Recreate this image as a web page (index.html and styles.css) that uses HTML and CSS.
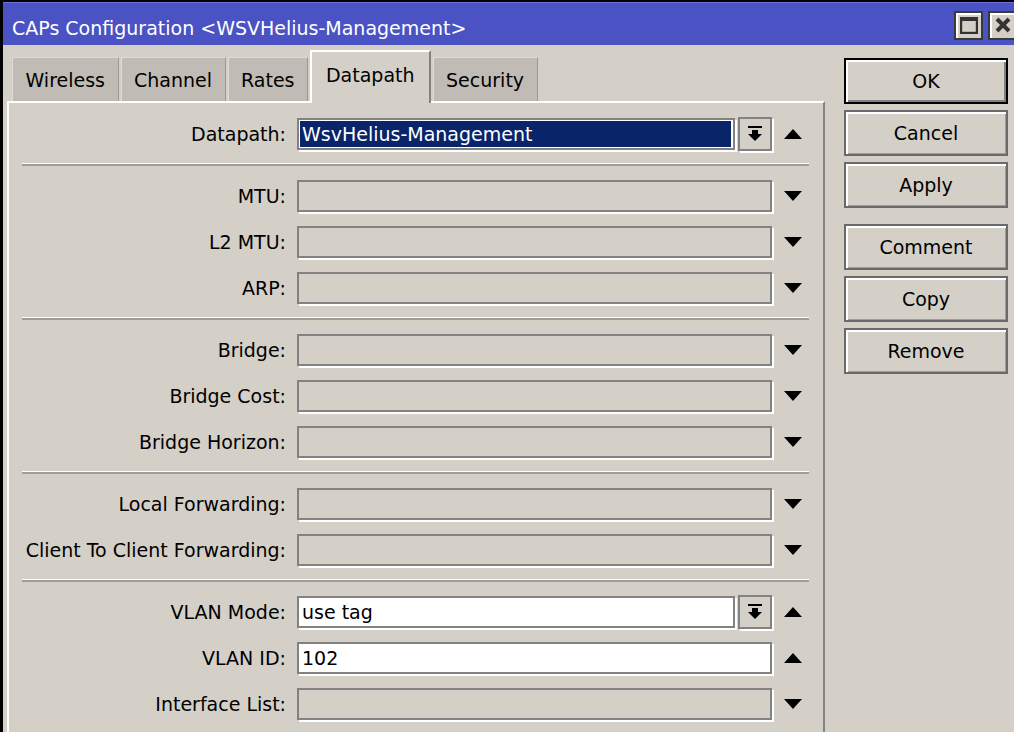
FILE: index.html
```html
<!DOCTYPE html>
<html>
<head>
<meta charset="utf-8">
<link rel="stylesheet" href="styles.css">
</head>
<body>
<div class="window">
  <div class="titlebar">
    <span class="title">CAPs Configuration &lt;WSVHelius-Management&gt;</span>
    <div class="wbtns">
      <span class="wbtn"><svg width="18" height="17" viewBox="0 0 18 17"><rect x="1" y="1.5" width="16" height="14.5" fill="none" stroke="#333" stroke-width="2.4"/><rect x="0" y="0" width="18" height="4" fill="#333"/></svg></span>
      <span class="wbtn close"><svg width="16" height="16" viewBox="0 0 16 16"><path d="M2 2 L14 14 M14 2 L2 14" stroke="#333" stroke-width="4"/></svg></span>
    </div>
  </div>
  <div class="main">
    <div class="left">
      <div class="tabs">
        <div class="tab">Wireless</div>
        <div class="tab">Channel</div>
        <div class="tab">Rates</div>
        <div class="tab active">Datapath</div>
        <div class="tab">Security</div>
      </div>
      <div class="panel">
        <div class="row">
          <span class="lbl">Datapath:</span>
          <div class="ctrl combo">
            <div class="field sel"><span class="seltext">WsvHelius-Management</span></div>
            <div class="ddbtn"><svg width="14" height="16" viewBox="0 0 14 16"><rect x="0" y="0" width="14" height="2" fill="#000"/><rect x="4" y="4" width="6" height="4" fill="#000"/><polygon points="0,8 14,8 7,15" fill="#000"/></svg></div>
          </div>
          <svg class="arrow" width="18" height="10" viewBox="0 0 18 10"><polygon points="9,0 18,10 0,10" fill="#000"/></svg>
        </div>
        <div class="sep"></div>
        <div class="row">
          <span class="lbl">MTU:</span>
          <div class="ctrl"><div class="field"></div></div>
          <svg class="arrow" width="18" height="10" viewBox="0 0 18 10"><polygon points="0,0 18,0 9,10" fill="#000"/></svg>
        </div>
        <div class="row">
          <span class="lbl">L2 MTU:</span>
          <div class="ctrl"><div class="field"></div></div>
          <svg class="arrow" width="18" height="10" viewBox="0 0 18 10"><polygon points="0,0 18,0 9,10" fill="#000"/></svg>
        </div>
        <div class="row">
          <span class="lbl">ARP:</span>
          <div class="ctrl"><div class="field"></div></div>
          <svg class="arrow" width="18" height="10" viewBox="0 0 18 10"><polygon points="0,0 18,0 9,10" fill="#000"/></svg>
        </div>
        <div class="sep"></div>
        <div class="row">
          <span class="lbl">Bridge:</span>
          <div class="ctrl"><div class="field"></div></div>
          <svg class="arrow" width="18" height="10" viewBox="0 0 18 10"><polygon points="0,0 18,0 9,10" fill="#000"/></svg>
        </div>
        <div class="row">
          <span class="lbl">Bridge Cost:</span>
          <div class="ctrl"><div class="field"></div></div>
          <svg class="arrow" width="18" height="10" viewBox="0 0 18 10"><polygon points="0,0 18,0 9,10" fill="#000"/></svg>
        </div>
        <div class="row">
          <span class="lbl">Bridge Horizon:</span>
          <div class="ctrl"><div class="field"></div></div>
          <svg class="arrow" width="18" height="10" viewBox="0 0 18 10"><polygon points="0,0 18,0 9,10" fill="#000"/></svg>
        </div>
        <div class="sep"></div>
        <div class="row">
          <span class="lbl">Local Forwarding:</span>
          <div class="ctrl"><div class="field"></div></div>
          <svg class="arrow" width="18" height="10" viewBox="0 0 18 10"><polygon points="0,0 18,0 9,10" fill="#000"/></svg>
        </div>
        <div class="row">
          <span class="lbl">Client To Client Forwarding:</span>
          <div class="ctrl"><div class="field"></div></div>
          <svg class="arrow" width="18" height="10" viewBox="0 0 18 10"><polygon points="0,0 18,0 9,10" fill="#000"/></svg>
        </div>
        <div class="sep"></div>
        <div class="row">
          <span class="lbl">VLAN Mode:</span>
          <div class="ctrl combo">
            <div class="field white">use tag</div>
            <div class="ddbtn"><svg width="14" height="16" viewBox="0 0 14 16"><rect x="0" y="0" width="14" height="2" fill="#000"/><rect x="4" y="4" width="6" height="4" fill="#000"/><polygon points="0,8 14,8 7,15" fill="#000"/></svg></div>
          </div>
          <svg class="arrow" width="18" height="10" viewBox="0 0 18 10"><polygon points="9,0 18,10 0,10" fill="#000"/></svg>
        </div>
        <div class="row">
          <span class="lbl">VLAN ID:</span>
          <div class="ctrl"><div class="field white">102</div></div>
          <svg class="arrow" width="18" height="10" viewBox="0 0 18 10"><polygon points="9,0 18,10 0,10" fill="#000"/></svg>
        </div>
        <div class="row">
          <span class="lbl">Interface List:</span>
          <div class="ctrl"><div class="field"></div></div>
          <svg class="arrow" width="18" height="10" viewBox="0 0 18 10"><polygon points="0,0 18,0 9,10" fill="#000"/></svg>
        </div>
      </div>
    </div>
    <div class="buttons">
      <div class="btn default">OK</div>
      <div class="btn">Cancel</div>
      <div class="btn">Apply</div>
      <div class="btn group">Comment</div>
      <div class="btn">Copy</div>
      <div class="btn">Remove</div>
    </div>
  </div>
</div>
</body>
</html>
```
FILE: styles.css
```css
html, body {
  margin: 0;
  padding: 0;
  background: #000;
  width: 1014px;
  height: 732px;
  overflow: hidden;
}
body {
  font-family: "DejaVu Sans", Verdana, sans-serif;
  font-size: 19px;
  color: #000;
}
.window {
  margin-left: 3px;
  margin-top: 2px;
  width: 1011px;
  height: 730px;
  background: #d4d0c8;
  overflow: hidden;
}
.titlebar {
  height: 43px;
  box-sizing: border-box;
  background: #4a52c4;
  border-top: 1px solid #6a72d8;
  display: flex;
  align-items: center;
  padding-left: 9px;
}
.title {
  color: #fff;
  flex: 1;
  padding-top: 8px;
  white-space: nowrap;
}
.wbtns {
  display: flex;
  gap: 5px;
  margin-right: -3px;
  margin-top: 2px;
}
.wbtn {
  width: 29px;
  height: 29px;
  box-sizing: border-box;
  border: 2px solid #3a3a3a;
  background: #d4d0c8;
  box-shadow: inset 2px 2px 0 #fff;
  display: flex;
  align-items: center;
  justify-content: center;
}
.main {
  display: flex;
  align-items: flex-start;
}
.left {
  margin-left: 4px;
  width: 818px;
  margin-top: 5px;
}
.tabs {
  display: flex;
  align-items: flex-end;
  height: 51px;
  padding-left: 5px;
  gap: 2px;
}
.tab {
  height: 44px;
  box-sizing: border-box;
  padding: 0 12.5px;
  display: flex;
  align-items: center;
  background: #c0bcb5;
  border-top: 1px solid #dedbd4;
  border-left: 1px solid #dedbd4;
  border-right: 1px solid #9c9892;
  white-space: nowrap;
}
.tab.active {
  height: 53px;
  margin-bottom: -2px;
  padding: 0 14px 6px;
  background: #d4d0c8;
  border-top: 2px solid #fff;
  border-left: 2px solid #fff;
  border-right: 2px solid #86837e;
  position: relative;
  z-index: 1;
}
.panel {
  border-top: 2px solid #fff;
  border-left: 2px solid #fff;
  border-right: 2px solid #86837e;
  padding-top: 8px;
  height: 640px;
  box-sizing: border-box;
}
.row {
  display: flex;
  align-items: center;
  height: 46px;
}
.lbl {
  width: 277px;
  margin-right: 11px;
  text-align: right;
  white-space: nowrap;
}
.ctrl {
  width: 475px;
  display: flex;
  align-items: center;
  gap: 3px;
}
.field {
  flex: 1;
  height: 32px;
  box-sizing: border-box;
  border: 2px solid #828282;
  box-shadow: 2px 2px 0 #fff;
  background: #d4d0c8;
  display: flex;
  align-items: center;
  padding-left: 3px;
  white-space: nowrap;
}
.field.white {
  background: #fff;
}
.field.sel {
  background: #fff;
  padding: 1px 2px 1px 1px;
}
.seltext {
  background: #0a246a;
  color: #fff;
  height: 100%;
  flex: 1;
  display: flex;
  align-items: center;
  padding-left: 2px;
}
.ddbtn {
  width: 34px;
  height: 34px;
  box-sizing: border-box;
  border: 2px solid #828282;
  box-shadow: 2px 2px 0 #fff;
  background: #d4d0c8;
  display: flex;
  align-items: center;
  justify-content: center;
}
.arrow {
  margin-left: 12px;
  display: block;
}
.sep {
  margin: 6px 14px 7px 13px;
  height: 1px;
  background: #fff;
  border-bottom: 2px solid #a09d97;
}
.sep:first-of-type {
  margin-bottom: 6px;
}
.buttons {
  margin-left: 19px;
  margin-top: 13px;
  display: flex;
  flex-direction: column;
  gap: 6px;
}
.btn {
  width: 164px;
  height: 46px;
  box-sizing: border-box;
  border: 2px solid #6a6a6a;
  box-shadow: inset 2px 2px 0 #fff, inset -1px -1px 0 #a09d97;
  display: flex;
  align-items: center;
  justify-content: center;
}
.btn.default {
  border-color: #000;
  box-shadow: inset 2px 2px 0 #fff, inset -2px -2px 0 #808080;
}
.btn.group {
  margin-top: 10px;
}
```
